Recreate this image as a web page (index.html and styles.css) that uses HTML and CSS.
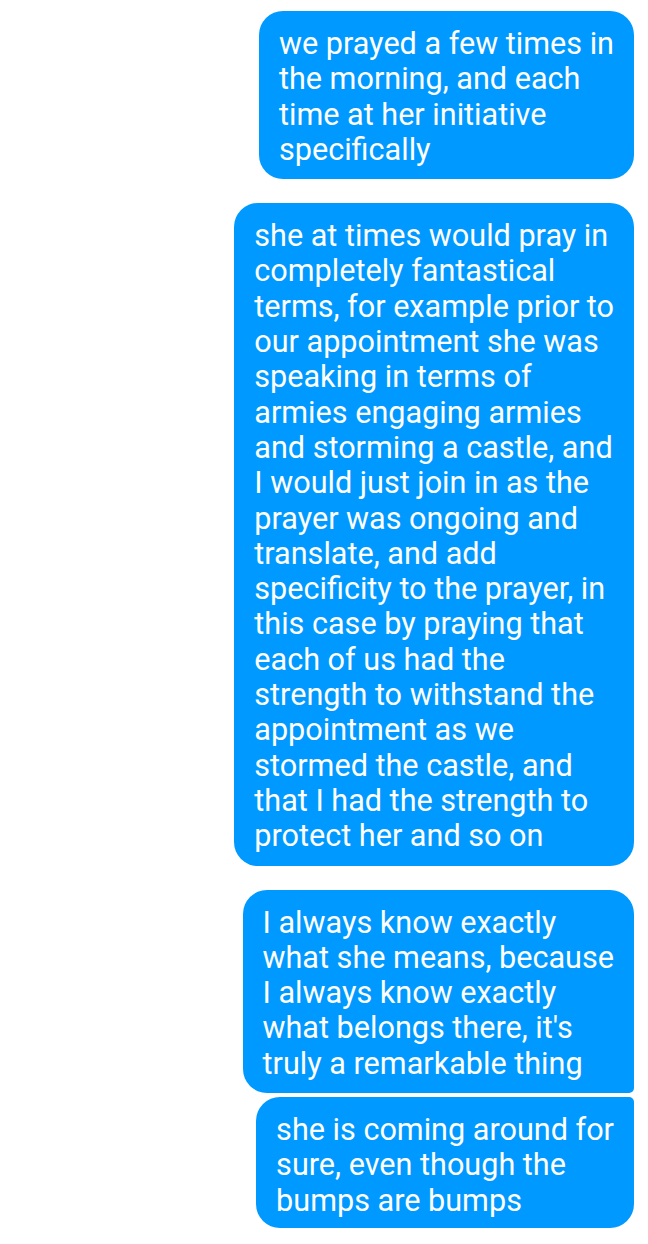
FILE: index.html
```html
<!DOCTYPE html>
<html>
<head>
<meta charset="utf-8">
<link rel="stylesheet" href="styles.css">
</head>
<body>
<div class="thread">
  <div class="bubble">we prayed a few times in<br>the morning, and each<br>time at her initiative<br>specifically</div>
  <div class="bubble">she at times would pray in<br>completely fantastical<br>terms, for example prior to<br>our appointment she was<br>speaking in terms of<br>armies engaging armies<br>and storming a castle, and<br>I would just join in as the<br>prayer was ongoing and<br>translate, and add<br>specificity to the prayer, in<br>this case by praying that<br>each of us had the<br>strength to withstand the<br>appointment as we<br>stormed the castle, and<br>that I had the strength to<br>protect her and so on</div>
  <div class="group">
    <div class="bubble first">I always know exactly<br>what she means, because<br>I always know exactly<br>what belongs there, it's<br>truly a remarkable thing</div>
    <div class="bubble last">she is coming around for<br>sure, even though the<br>bumps are bumps</div>
  </div>
</div>
</body>
</html>
```
FILE: styles.css
```css
html, body {
  margin: 0;
  padding: 0;
  background: #ffffff;
}
.thread {
  display: flex;
  flex-direction: column;
  align-items: flex-end;
  gap: 24px;
  padding: 11px 14px 0 0;
}
.group {
  display: flex;
  flex-direction: column;
  align-items: flex-end;
  gap: 4px;
}
.bubble {
  background: #0099ff;
  color: #ffffff;
  font-family: Roboto, "Noto Sans", sans-serif;
  font-size: 30.6px;
  line-height: 35.3px;
  padding: 15px 20px 12px 20px;
  border-radius: 24px;
  white-space: nowrap;
}
.bubble.first {
  border-bottom-right-radius: 5px;
}
.bubble.last {
  border-top-right-radius: 5px;
  padding-bottom: 10px;
}
```
